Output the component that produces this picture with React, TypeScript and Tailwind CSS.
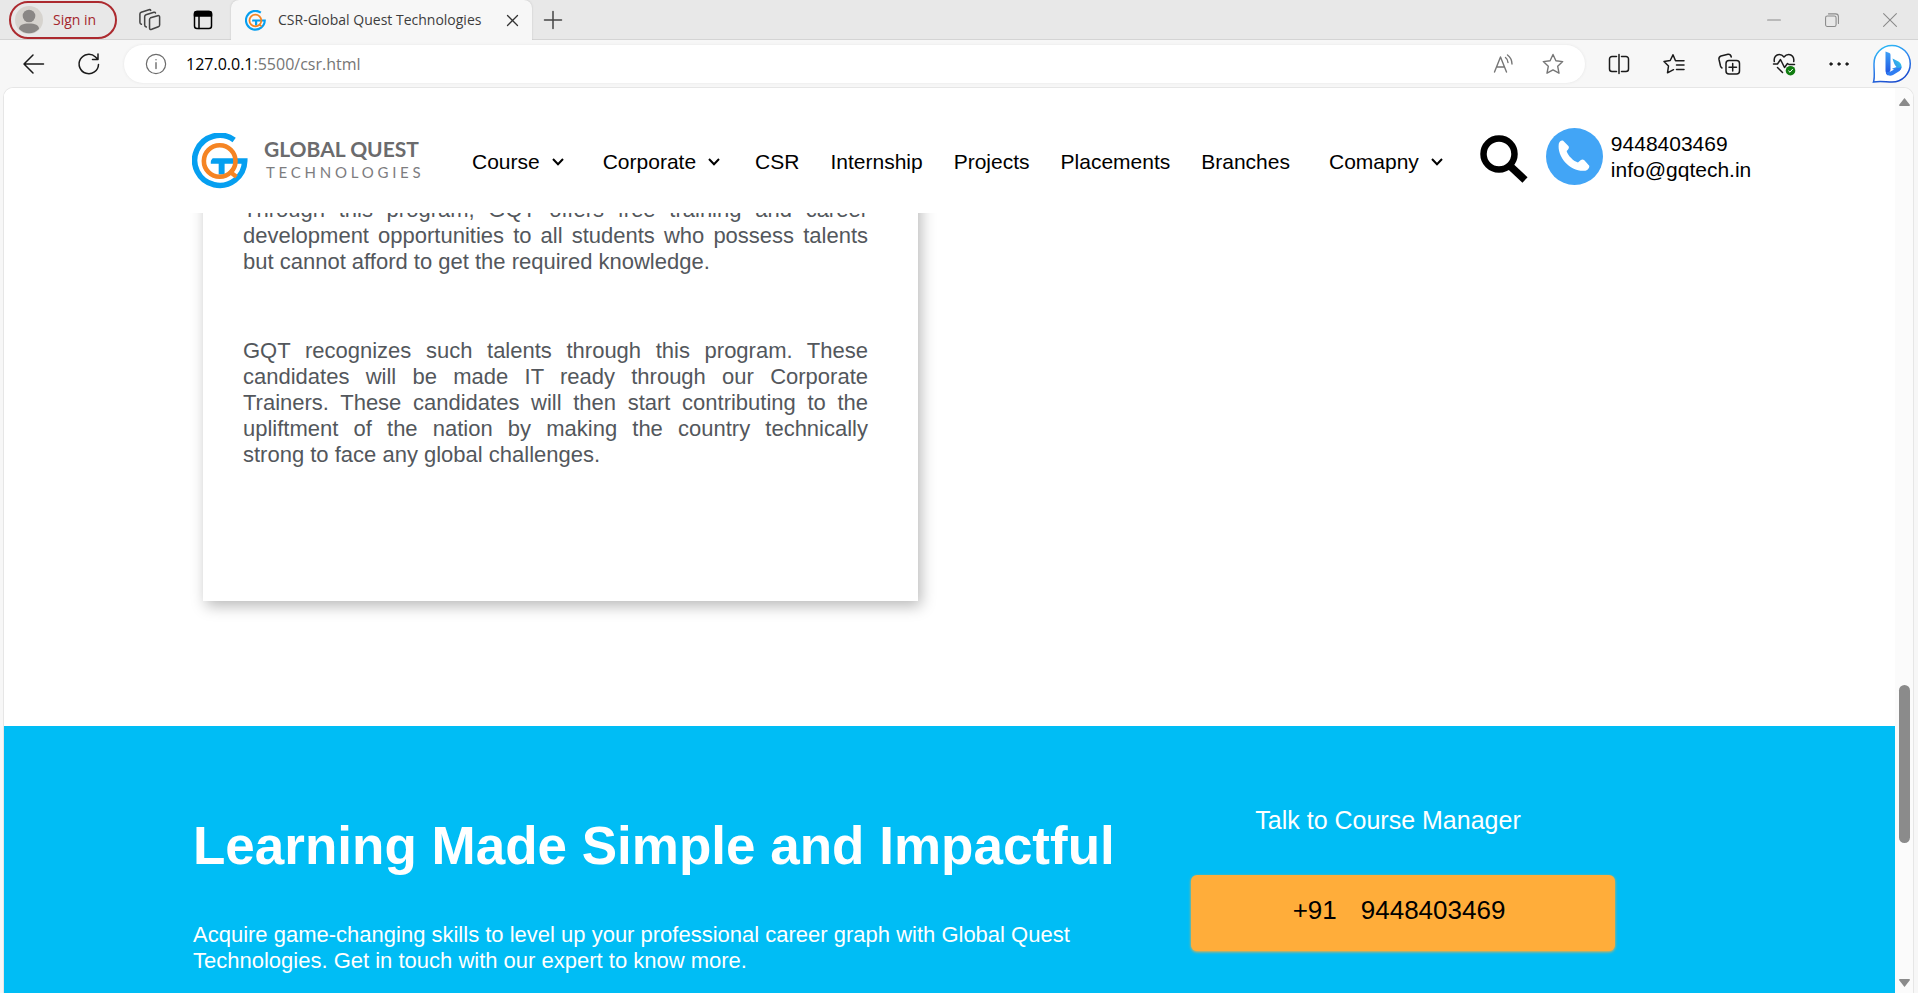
import type { ReactNode } from "react";

function GqtMark({ className }: { className: string }) {
  return (
    <svg viewBox="21 20 170 170" preserveAspectRatio="none" className={className} aria-hidden="true">
      <path
        d="M149 41 A76 76 0 1 0 181 105 L78 105"
        fill="none"
        stroke="#069ff0"
        strokeWidth="17"
      />
      <path d="M111 104 V146" stroke="#069ff0" strokeWidth="18" />
      <path d="M72 113 L84 96 L60 96 Z" fill="#fff" />
      <circle cx="105" cy="105" r="48" fill="none" stroke="#f58423" strokeWidth="14" />
      <path d="M134 136 L156 153" stroke="#f58423" strokeWidth="13" />
    </svg>
  );
}

function Icon({ children, className = "size-6", label }: { children: ReactNode; className?: string; label?: string }) {
  return (
    <svg
      viewBox="0 0 24 24"
      className={className}
      fill="none"
      stroke="currentColor"
      strokeWidth="1.5"
      strokeLinecap="round"
      strokeLinejoin="round"
      role={label ? "img" : undefined}
      aria-label={label}
      aria-hidden={label ? undefined : true}
    >
      {children}
    </svg>
  );
}

function TabStrip() {
  return (
    <div className="flex h-10 items-stretch border-b border-[#d4d4d4] bg-[#e8e8e8] pl-[9px]">
      <button className="mt-[1px] flex h-[38px] w-[108px] items-center gap-2.5 rounded-full border-2 border-[#ac2a2f] pl-1 text-sm text-[#a4262c]">
        <svg viewBox="0 0 28 28" className="size-7" aria-hidden="true">
          <circle cx="14" cy="14" r="14" fill="#d6d3ce" />
          <circle cx="14" cy="10" r="6.3" fill="#8a8785" />
          <path d="M4 23c0-4 4-5.500 10-5.500s10 1.500 10 5.500a14 14 0 0 1-20 0z" fill="#8a8785" />
        </svg>
        Sign in
      </button>
      <button aria-label="Workspaces" className="ml-[19px] flex items-center text-[#444]">
        <Icon className="size-[26px]">
          <g strokeWidth="1.4">
            <path d="M13.500 10 L20 8 Q21.800 7.600 21.800 9.300 V16.500 Q21.800 17.800 20.600 18.200 L14.500 20.600 Q12.500 21.200 12.500 19.300 V11.500 Q12.500 10.400 13.500 10" />
            <path d="M9.500 18.500 Q8 18 8 16.300 V9 Q8 7.600 9.200 7.200 L16.500 4.900 Q17.700 4.600 18 5.500" />
            <path d="M5 16 Q3.600 15.500 3.600 14 V6.500 Q3.600 5.200 4.800 4.800 L12 2.500 Q13.200 2.200 13.600 3.100" />
          </g>
        </Icon>
      </button>
      <button aria-label="Tab actions" className="ml-[29px] flex items-center text-black">
        <Icon>
          <rect x="3.500" y="3.500" width="17" height="17" rx="2.500" />
          <path d="M3.500 8 V6 a2.500 2.500 0 0 1 2.500-2.500 h12 A2.500 2.500 0 0 1 20.500 6 v2z" fill="currentColor" />
          <path d="M8 8 V20.500" />
        </Icon>
      </button>
      <div className="-mb-px ml-4 flex w-[301px] items-center rounded-t-lg bg-[#f7f7f7] pl-3.5 shadow-[0_0_2px_#bdbdbd]">
        <GqtMark className="size-[21px]" />
        <span className="ml-3 flex-1 whitespace-nowrap text-sm text-[#3d3d3d]">CSR-Global Quest Technologies</span>
        <button aria-label="Close tab" className="mr-3 text-[#333]">
          <Icon className="size-[15px]">
            <path d="M4 4 20 20 M20 4 4 20" strokeWidth="2" />
          </Icon>
        </button>
      </div>
      <button aria-label="New tab" className="ml-[9px] flex items-center text-[#444]">
        <Icon>
          <path d="M12 3.500 V20.500 M3.500 12 H20.500" />
        </Icon>
      </button>
      <div className="ml-auto flex items-center gap-11 pr-[21px] text-[#8a8a8a]">
        <button aria-label="Minimize">
          <Icon className="size-[14px]">
            <path d="M1 12 H23" strokeWidth="1.800" />
          </Icon>
        </button>
        <button aria-label="Restore">
          <Icon className="size-[14px]">
            <rect x="1" y="5" width="18" height="18" rx="3" strokeWidth="1.800" />
            <path d="M6 1.500 H18 a5 5 0 0 1 5 5 V18" strokeWidth="1.800" />
          </Icon>
        </button>
        <button aria-label="Close">
          <Icon className="size-[14px]">
            <path d="M1 1 23 23 M23 1 1 23" strokeWidth="1.800" />
          </Icon>
        </button>
      </div>
    </div>
  );
}

const starPath =
  "M12 2.500 14.900 8.700 21.700 9.600 16.700 14.300 18 21.200 12 17.900 6 21.200 7.300 14.300 2.300 9.600 9.100 8.700z";

function BingLogo() {
  return (
    <svg viewBox="0 0 40 40" className="size-10" aria-hidden="true">
      <defs>
        <linearGradient id="bubble" x1="0" y1="0" x2="0.4" y2="1">
          <stop offset="0" stopColor="#2bc4f5" />
          <stop offset="0.5" stopColor="#2f8af0" />
          <stop offset="1" stopColor="#1b4fd0" />
        </linearGradient>
        <linearGradient id="stem" x1="0" y1="0" x2="0" y2="1">
          <stop offset="0" stopColor="#3fa2f7" />
          <stop offset="1" stopColor="#1c4fe0" />
        </linearGradient>
        <linearGradient id="bowl" x1="0" y1="1" x2="1" y2="0">
          <stop offset="0" stopColor="#2f78f0" />
          <stop offset="1" stopColor="#35d6e6" />
        </linearGradient>
      </defs>
      <path
        d="M20 1.500 A18 18 0 1 1 20 38 C14 38 8 36.500 1.500 38 C3 33 2 28 2 20 A18 18 0 0 1 20 1.500z"
        fill="#fff"
        stroke="url(#bubble)"
        strokeWidth="1.500"
      />
      <path d="M20.500 14.500 L26.500 17.500 Q30 19.500 29.500 24 Q28.500 27 25.500 27.500 L20 24.800 L24.500 23 Q22 20.500 20.500 14.500z" fill="url(#bowl)" />
      <path d="M13.500 7.500 L17.500 9 Q18.500 9.500 18.500 11 V26 L16 31.500 Q13.500 30 13.500 27z" fill="url(#stem)" />
      <path d="M14 28.500 Q16.500 33.500 21 31 L27.500 27 Q29.500 25 29.500 22.500 Q28 24.500 25 24 L18.500 27.500z" fill="#2f7df2" />
    </svg>
  );
}

function Toolbar() {
  return (
    <div className="flex h-[47px] items-center bg-[#f7f7f7] pl-[22px] pr-1.5 pt-px text-[#1b1b1b]">
      <button aria-label="Back">
        <Icon>
          <path d="M21.500 12 H2.500 M11 3 L2 12 L11 21" />
        </Icon>
      </button>
      <button aria-label="Refresh" className="ml-[31px]">
        <Icon>
          <path d="M21.500 12.500 A9.700 9.700 0 1 1 18.500 5 L21 7.500 M21 2 V7.500 H15.500" />
        </Icon>
      </button>
      <div className="ml-[23px] flex h-[38px] flex-1 items-center rounded-full bg-white pl-[21px] pr-5 shadow-[0_0_3px_#e4e4e4]">
        <button aria-label="Site information" className="text-[#6b6b6b]">
          <Icon className="size-[22px]">
            <circle cx="12" cy="12" r="10.500" strokeWidth="1.300" />
            <path d="M12 10.500 V17 M12 7.300 V7.400" />
          </Icon>
        </button>
        <div className="ml-[19px] flex-1 text-base text-[#767676]">
          <span className="text-black">127.0.0.1</span>:5500/csr.html
        </div>
        <button aria-label="Read aloud" className="text-[#767676]">
          <Icon>
            <path d="M2.500 20 L8.500 5 L14.500 20 M4.500 15 H12.500 M13.500 5.500 q2.500 2 2.500 5 M15.500 3 q4.500 3.500 4.500 9" strokeWidth="1.400" />
          </Icon>
        </button>
        <button aria-label="Add to favorites" className="ml-[25px] text-[#767676]">
          <Icon>
            <path d={starPath} strokeWidth="1.400" />
          </Icon>
        </button>
      </div>
      <div className="ml-[22px] flex items-center gap-[31px]">
        <button aria-label="Split screen">
          <Icon>
            <path d="M9.500 4.500 H5 A2.500 2.500 0 0 0 2.500 7 V17 A2.500 2.500 0 0 0 5 19.500 H9.500 M14.500 4.500 H19 A2.500 2.500 0 0 1 21.500 7 V17 a2.500 2.500 0 0 1-2.500 2.500 H14.500 M12 2.500 V21.500" />
          </Icon>
        </button>
        <button aria-label="Favorites">
          <Icon>
            <path d="M15 8.800 H13.500 L11 2.800 L8.200 8.500 L2 9.500 L6.500 14 L5.500 20.800 L11.500 17.700 M15 8.800 H22 M14.500 13 H22 M14.500 17.500 H22" />
          </Icon>
        </button>
        <button aria-label="Collections">
          <Icon>
            <rect x="9" y="8.500" width="13.500" height="13.500" rx="3" />
            <path d="M15.700 11.500 V19 M12 15.200 H19.500 M5 16 q-1-.5-1.500-2 L2 7.500 Q1.500 5 4 4 L11 2.300 Q13.500 2 14.300 5" />
          </Icon>
        </button>
        <button aria-label="Browser essentials">
          <Icon>
            <path d="M2.300 9.500 C1.500 5 4.500 2.500 7.200 2.500 C9.500 2.500 11 3.700 12 5 C13 3.700 14.500 2.500 16.800 2.500 C19.500 2.500 22.500 5 21.700 9.500 M1.500 12 H5.500 L8.500 7.500 L12.500 15.500 L15.500 11.500 L17 12.500 H22.500 M5.500 15.500 L10.500 20.500" />
            <circle cx="18.500" cy="18.700" r="4.800" fill="#107c10" stroke="none" />
            <path d="M16.700 19 L18 20.200 L20.500 17.300" stroke="#fff" strokeWidth="1" />
          </Icon>
        </button>
        <button aria-label="Settings and more">
          <Icon>
            <circle cx="4" cy="12" r="1.200" fill="currentColor" strokeWidth="1" />
            <circle cx="12" cy="12" r="1.200" fill="currentColor" strokeWidth="1" />
            <circle cx="20" cy="12" r="1.200" fill="currentColor" strokeWidth="1" />
          </Icon>
        </button>
      </div>
      <button aria-label="Bing chat" className="ml-[21px]">
        <BingLogo />
      </button>
    </div>
  );
}

const navItems = [
  { label: "Course", menu: true },
  { label: "Corporate", menu: true },
  { label: "CSR", menu: false },
  { label: "Internship", menu: false },
  { label: "Projects", menu: false },
  { label: "Placements", menu: false },
  { label: "Branches", menu: false },
  { label: "Comapny", menu: true },
];

function SiteHeader() {
  return (
    <header className="flex h-[125px] shrink-0 items-center bg-white pl-[188px] pt-5">
      <a href="#home" className="flex w-[276px] shrink-0 items-center gap-4 font-[Lato,sans-serif]">
        <GqtMark className="size-14" />
        <span className="block whitespace-nowrap pb-1">
          <span className="block text-[21px] font-bold leading-[26px] text-[#6b6b6d]">GLOBAL QUEST</span>
          <span className="block pl-0.5 text-[15px] leading-5 tracking-[0.25em] text-[#7d7d7f]">TECHNOLOGIES</span>
        </span>
      </a>
      <nav className="flex items-center gap-[31px] whitespace-nowrap pt-0.5 text-[21px] leading-6 text-black">
        {navItems.map((item) =>
          item.menu ? (
            <button key={item.label} className="flex items-center gap-3 px-1 last:ml-1">
              {item.label}
              <svg viewBox="0 0 12 8" className="h-2 w-3" fill="none" stroke="currentColor" strokeWidth="2" aria-hidden="true">
                <path d="M1 1 L6 6.200 L11 1" />
              </svg>
            </button>
          ) : (
            <a key={item.label} href={"#" + item.label.toLowerCase()}>
              {item.label}
            </a>
          ),
        )}
      </nav>
      <div className="flex items-center pb-2 pl-[33px]">
        <button aria-label="Search" className="pt-1">
          <svg viewBox="0 0 48 48" className="size-12" fill="none" stroke="#000" aria-hidden="true">
            <circle cx="19" cy="19" r="15.500" strokeWidth="6.500" />
            <path d="M29 30 L45 45" strokeWidth="7.500" />
          </svg>
        </button>
        <svg viewBox="0 0 58 58" className="ml-[18px] size-[57px]" aria-hidden="true">
          <circle cx="29" cy="29" r="29" fill="#42a5f6" />
          <path
            d="M13 16 C14 13 16 12 17.500 13 L23 18.500 C24 20 22.500 22 21 23.500 C22 28 28.500 34.500 32.500 35 L35.500 32.500 C37 31.500 38 32 39 32.800 L44 38.500 C44.500 40.500 42.500 43 40 43.500 C25 45 11 30 13 16z"
            fill="#fff"
          />
        </svg>
        <address className="pl-2 text-[21px] not-italic leading-[26px] text-black">
          <a href="tel:9448403469" className="block">9448403469</a>
          <a href="mailto:info@gqtech.in" className="block">info@gqtech.in</a>
        </address>
      </div>
    </header>
  );
}

function Banner() {
  return (
    <section className="flex flex-1 items-start bg-[#00bdf5] pl-[189px] text-white">
      <div className="w-[920px] pt-[90px]">
        <h1 className="whitespace-nowrap text-[53px] font-bold leading-[60px]">Learning Made Simple and Impactful</h1>
        <p className="mt-[46px] text-[22px] leading-[26px]">
          Acquire game-changing skills to level up your professional career graph with Global Quest Technologies. Get in
          touch with our expert to know more.
        </p>
      </div>
      <div className="ml-[78px] w-[424px] pt-[79px]">
        <h2 className="pr-[30px] text-center text-[25px] leading-[30px]">Talk to Course Manager</h2>
        <a
          href="tel:+919448403469"
          className="mt-10 flex h-[76px] items-center justify-center gap-6 rounded-md bg-[#ffad3a] pb-1.5 pr-2 text-[26px] text-black shadow-[0_1px_3px_#ffad3a]"
        >
          <span>+91</span>
          <span>9448403469</span>
        </a>
      </div>
    </section>
  );
}

function ScrollBar() {
  return (
    <div className="flex w-[18px] flex-col items-center bg-[#fbfbfb] pb-1.5 pt-2.5">
      <svg viewBox="0 0 11 8" className="h-2 w-[11px]" aria-hidden="true">
        <path d="M5.500 0 L11 7 Q11 8 10 8 H1 Q0 8 0 7z" fill="#8b8b8b" />
      </svg>
      <div className="flex-[578]" />
      <div className="w-[11px] flex-[158] rounded-full bg-[#8b8b8b]" />
      <div className="flex-[136]" />
      <svg viewBox="0 0 11 8" className="h-2 w-[11px]" aria-hidden="true">
        <path d="M5.500 8 L0 1 Q0 0 1 0 H10 Q11 0 11 1z" fill="#8b8b8b" />
      </svg>
    </div>
  );
}

export default function App() {
  return (
    <div className="flex h-screen flex-col overflow-hidden bg-[#f7f7f7] font-['Open_Sans',sans-serif]">
      <TabStrip />
      <Toolbar />
      <div className="ml-[3px] mr-1 flex min-h-0 flex-1 overflow-hidden rounded-t-[10px] border border-b-0 border-[#e6e6e6] bg-white">
        <div className="flex min-w-0 flex-1 flex-col font-['Liberation_Sans',Arial,sans-serif]">
          <SiteHeader />
          <main className="flex min-h-0 flex-1 flex-col overflow-hidden">
            <article className="-mt-14 ml-[199px] w-[715px] bg-white pb-[133px] pl-10 pr-[50px] pt-10 text-justify text-[22px] leading-[26px] text-[#53575c] shadow-[3px_5px_14px_rgba(0,0,0,0.28)]">
              <p>
                Through this program, GQT offers free training and career development opportunities to all students who
                possess talents but cannot afford to get the required knowledge.
              </p>
              <p className="mt-[63px]">
                GQT recognizes such talents through this program. These candidates will be made IT ready through our
                Corporate Trainers. These candidates will then start contributing to the upliftment of the nation by
                making the country technically strong&nbsp;to face any global challenges.
              </p>
            </article>
            <div className="h-[125px] shrink-0" />
            <Banner />
          </main>
        </div>
        <ScrollBar />
      </div>
    </div>
  );
}
